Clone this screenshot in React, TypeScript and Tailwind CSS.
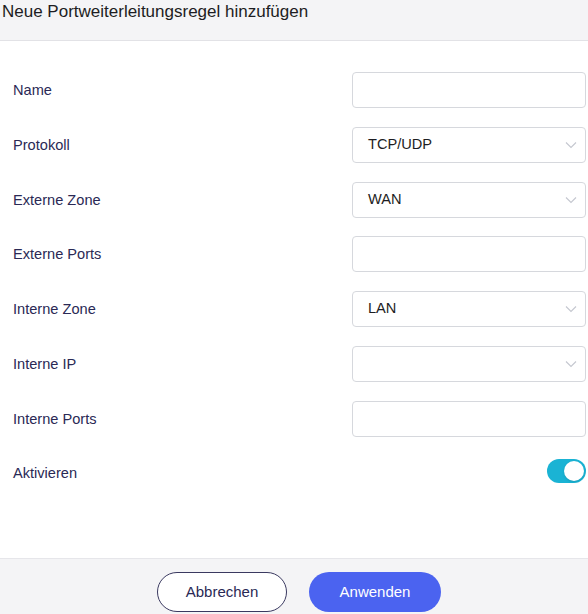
import { useState } from 'react'

type Field = { label: string; kind: 'input' | 'select'; value?: string }

const fields: Field[] = [
  { label: 'Name', kind: 'input' },
  { label: 'Protokoll', kind: 'select', value: 'TCP/UDP' },
  { label: 'Externe Zone', kind: 'select', value: 'WAN' },
  { label: 'Externe Ports', kind: 'input' },
  { label: 'Interne Zone', kind: 'select', value: 'LAN' },
  { label: 'Interne IP', kind: 'select', value: '' },
  { label: 'Interne Ports', kind: 'input' },
]

const Chevron = () => (
  <svg width="12" height="8" viewBox="0 0 12 8" fill="none" className="text-[#c4c7cf]">
    <path d="M1 1.5l5 5 5-5" stroke="currentColor" strokeWidth="1.1" />
  </svg>
)

export default function App() {
  const [enabled, setEnabled] = useState(true)

  return (
    <div className="w-[588px] h-[614px] flex flex-col bg-white font-['Liberation_Sans',Arial,sans-serif]">
      <div className="h-[41px] shrink-0 bg-[#f4f4f6] border-b border-[#e2e2e6] px-[2px] pt-[1px]">
        <h1 className="text-[17px] leading-[22px] text-[#1d1d22]">Neue Portweiterleitungsregel hinzufügen</h1>
      </div>

      <div className="flex-1 flex flex-col pt-[31px]">
        {fields.map((f) => (
          <div key={f.label} className="h-[54.8px] flex items-start">
            <label className="w-[352px] pl-[13px] pt-[10px] text-[14.6px] leading-[17px] text-[#2a2955]">{f.label}</label>
            {f.kind === 'input' ? (
              <input className="w-[234px] h-[36px] rounded-[4px] border border-[#d6d8dd] bg-white outline-none" />
            ) : (
              <div className="w-[234px] h-[36px] rounded-[4px] border border-[#d6d8dd] bg-white flex items-center justify-between pl-[15px] pr-[8px]">
                <span className="text-[14.6px] text-[#1d1d22]">{f.value}</span>
                <Chevron />
              </div>
            )}
          </div>
        ))}
        <div className="h-[30px] flex items-start justify-between">
          <span className="pl-[13px] pt-[9px] text-[14.6px] leading-[17px] text-[#2a2955]">Aktivieren</span>
          <button
            onClick={() => setEnabled(!enabled)}
            className={`mt-[3px] mr-[2px] w-[39px] h-[24px] rounded-full flex items-center p-[2px] ${enabled ? 'bg-[#1ab3d4] justify-end' : 'bg-[#d6d8dd] justify-start'}`}
          >
            <span className="w-[20px] h-[20px] rounded-full bg-white shadow-sm" />
          </button>
        </div>
      </div>

      <div className="h-[56px] shrink-0 bg-[#f4f4f6] border-t border-[#e6e6ea] flex justify-center items-start gap-[22px] pt-[13px] pl-[10px]">
        <button className="w-[130px] h-[40px] rounded-full border-[1.5px] border-[#3a3960] bg-white text-[15px] text-[#2a2955]">Abbrechen</button>
        <button className="w-[132px] h-[40px] rounded-full bg-[#4b63f0] text-[15px] text-white">Anwenden</button>
      </div>
    </div>
  )
}
